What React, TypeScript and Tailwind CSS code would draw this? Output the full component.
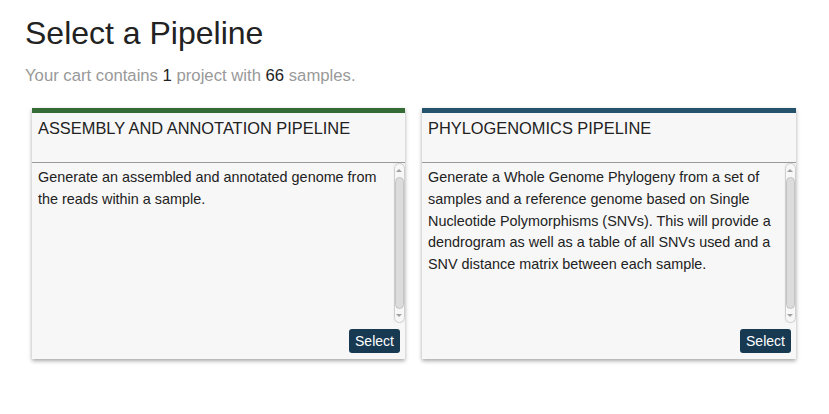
import React from "react";

function FakeScrollbar() {
  return (
    <div className="w-[12px] h-full flex-none flex flex-col items-center bg-[#f2f2f2]">
      <div className="w-[11px] h-full rounded-[6px] border border-[#cfcfcf] bg-[#f7f7f7] flex flex-col items-center">
        <div className="h-[13px] w-full flex items-center justify-center">
          <div className="w-0 h-0 border-l-[3px] border-r-[3px] border-b-[3px] border-l-transparent border-r-transparent border-b-[#a0a0a0]" />
        </div>
        <div className="flex-1 w-[9px] rounded-[5px] bg-[#dcdcdc] border border-[#c4c4c4]" />
        <div className="h-[13px] w-full flex items-center justify-center">
          <div className="w-0 h-0 border-l-[3px] border-r-[3px] border-t-[3px] border-l-transparent border-r-transparent border-t-[#a0a0a0]" />
        </div>
      </div>
    </div>
  );
}

function Card({ title, desc, color, w }: { title: string; desc: string; color: string; w: string }) {
  return (
    <div className={`${w} h-[251px] bg-[#f7f7f7] flex flex-col shadow-[0_2px_4px_rgba(0,0,0,0.35)] border-t-[5px] ${color}`}>
      <div className="h-[50px] flex-none border-b border-[#9a9a9a] px-[6px] pt-[5px] text-[16.4px] leading-[20px] text-[#222]">
        {title}
      </div>
      <div className="h-[160px] flex-none flex">
        <div className="flex-1 pl-[6px] pr-[3px] pt-[4px] text-[14.4px] leading-[21.75px] text-[#222]">{desc}</div>
        <FakeScrollbar />
      </div>
      <div className="flex-1 flex justify-end items-start pt-[6px] pr-[5px]">
        <button className="h-[24px] w-[51px] rounded-[3px] bg-[#173a52] text-white text-[14px] leading-[24px] text-center">
          Select
        </button>
      </div>
    </div>
  );
}

export default function App() {
  return (
    <div className="w-[829px] h-[414px] bg-white font-['Liberation_Sans',Arial,sans-serif]">
      <div className="pl-[25px] pt-[14px]">
        <h1 className="text-[32px] leading-[38px] text-[#222]">Select a Pipeline</h1>
        <p className="mt-[13px] text-[16.7px] leading-[22px] text-[#999]">
          Your cart contains <span className="text-[#222]">1</span> project with{" "}
          <span className="text-[#222]">66</span> samples.
        </p>
      </div>
      <div className="flex gap-[17px] pl-[32px] mt-[21px]">
        <Card
          w="w-[373px]"
          title="ASSEMBLY AND ANNOTATION PIPELINE"
          desc="Generate an assembled and annotated genome from the reads within a sample."
          color="border-t-[#356b35]"
        />
        <Card
          w="w-[374px]"
          title="PHYLOGENOMICS PIPELINE"
          desc="Generate a Whole Genome Phylogeny from a set of samples and a reference genome based on Single Nucleotide Polymorphisms (SNVs). This will provide a dendrogram as well as a table of all SNVs used and a SNV distance matrix between each sample."
          color="border-t-[#24536b]"
        />
      </div>
    </div>
  );
}
